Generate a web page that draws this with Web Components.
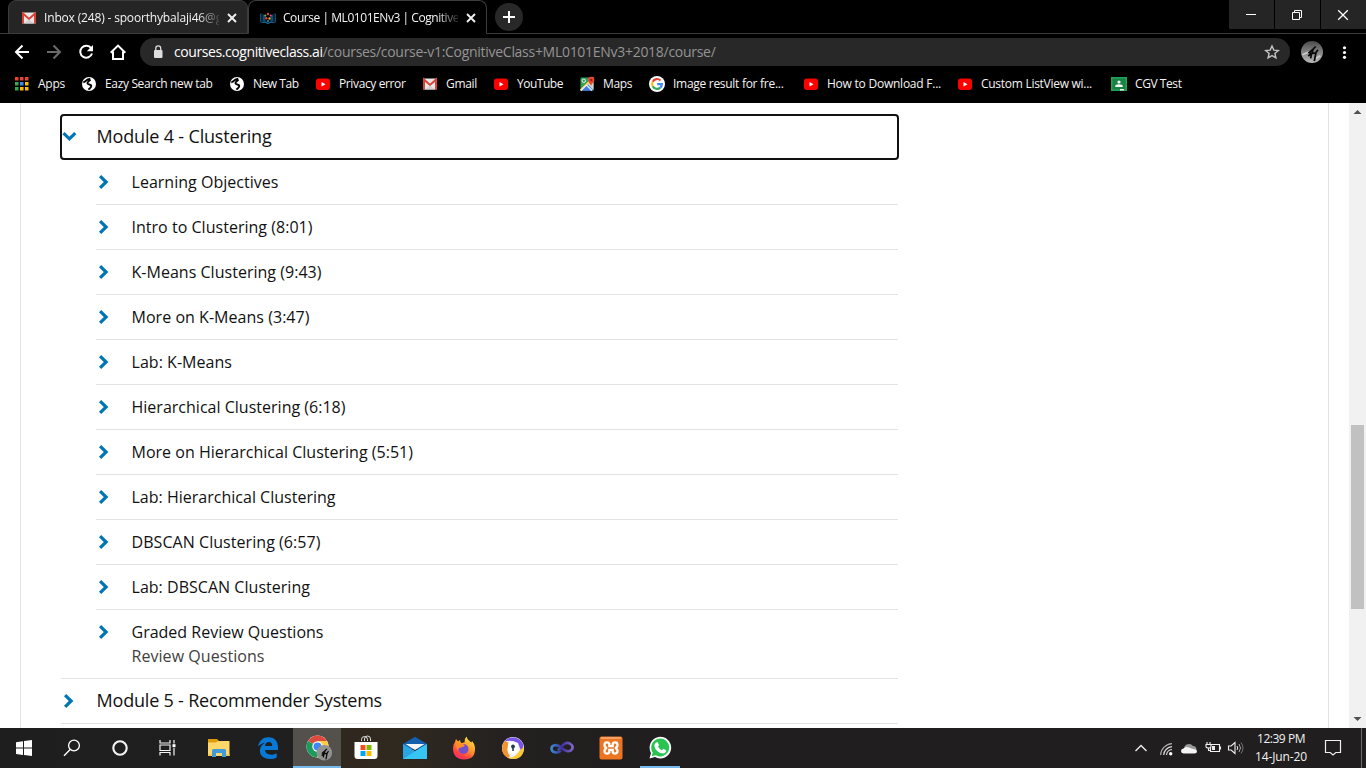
<!DOCTYPE html>
<html lang="en">
<head>
<meta charset="utf-8">
<title>Course | ML0101ENv3 | Cognitive Class</title>
<style>
html,body{margin:0;height:100%;overflow:hidden;background:#000}
</style>
</head>
<body>
<desktop-screen></desktop-screen>
<script>
const YT = '<rect x="1" y="2.5" width="14" height="11.5" rx="3" fill="#f00"/><path d="M6.5 6v4.6l4-2.3z" fill="#fff"/>';
const GLOBE = '<circle cx="8" cy="8" r="7" fill="#fff"/><path d="M2.300 6.300C4 6.200 4.500 5.500 5.500 4.300S8 3.300 9.300 2.600M9.500 3.700C7 5.500 6 6.500 6.600 7.600S10.500 8.300 10.300 10 8.600 12.400 7.400 13.600" fill="none" stroke="#000" stroke-width="1.900"/>';
const GMAIL = '<rect x="1" y="2.500" width="14" height="11" rx=".8" fill="#e8e8e8"/><path d="M2 13.500V3.500L8 9l6-5.500v10" fill="none" stroke="#dc4337" stroke-width="2"/><path d="M3 13.500L8 9.500l5 4z" fill="#d0d0d0"/>';
const FIGURE = '<path d="M8 16.500l3-3-2-1 4.500-4L16 6M13 9.500l-1 4 4-.5 2.500-3.500M16.500 12l-2 10M11.500 14l-1 5" fill="none" stroke="#080808" stroke-width="1.900"/>';
const ICONS = {
  gmail:[16,GMAIL], youtube:[16,YT], globe:[16,GLOBE],
  cc:[16,'<path d="M0 4l1.500-1V13L0 12zM16 4l-1.500-1V13l1.500-1zM2.500 4l3 2v6l-3-1zM13.500 4l-3 2v6l3-1z" fill="#0d4c72"/><path d="M1.500 12.500q3.500-1 6.500 1 3-2 6.500-1" stroke="#176799" fill="none" stroke-width="1.300"/><circle cx="8" cy="4" r="1.200" fill="#e6434b"/><circle cx="5.300" cy="5.500" r="1.100" fill="#7bb342"/><circle cx="10.700" cy="5.500" r="1.100" fill="#d94d8a"/><circle cx="6.300" cy="8.300" r="1.200" fill="#e04432"/><circle cx="9.500" cy="8.500" r="1.200" fill="#f0a030"/><circle cx="8" cy="11" r="1" fill="#26a4a4"/>'],
  close:[16,'<path d="M4 4l8 8M12 4l-8 8" stroke="#f1f1f1" stroke-width="1.900"/>'],
  plus:[28,'<circle cx="14" cy="14" r="14" fill="#282828"/><path d="M14 8v12M8 14h12" stroke="#fff" stroke-width="2"/>'],
  min:[16,'<path d="M3 7.500h10" stroke="#fff"/>'],
  restore:[16,'<path d="M3.500 5.500h7v7h-7zM5.500 5V3.500h7v7H11" stroke="#fff" fill="none"/>'],
  xwin:[16,'<path d="M3.200 3.200l9.600 9.600M12.800 3.200l-9.600 9.600" stroke="#fff" stroke-width="1.300"/>'],
  back:[20,'<path d="M17 10H4M10.500 3.500L4 10l6.500 6.500" stroke="#fff" stroke-width="2" fill="none"/>'],
  fwd:[20,'<path d="M3 10h13M9.500 3.500L16 10l-6.500 6.500" stroke="#6b6b6b" stroke-width="2" fill="none"/>'],
  reload:[20,'<path d="M15.200 6.200A6 6 0 1 0 16 11.500" stroke="#fff" stroke-width="2" fill="none"/><path d="M17 3v6.200h-6.200z" fill="#fff"/>'],
  home:[20,'<path d="M2.700 10.800L10 3.600l7.300 7.200M5 9.500V17h10V9.500" stroke="#fff" stroke-width="2" fill="none"/>'],
  lock:[16,'<rect x="4" y="6" width="8.500" height="8" rx="1" fill="#dedede"/><path d="M5.800 6.500V4.300a2.450 2.450 0 0 1 4.900 0v2.200" stroke="#dedede" stroke-width="1.300" fill="none"/>'],
  star:[16,'<path d="M8 2l1.800 4.100 4.500.4-3.400 3 1 4.400L8 11.600l-3.900 2.300 1-4.400-3.400-3 4.500-.4z" fill="none" stroke="#c4c4c4" stroke-width="1.400"/>'],
  avatar:[24,'<defs><linearGradient id="g" x2="0" y2="1"><stop stop-color="#4a4a4a"/><stop offset=".55" stop-color="#888"/><stop offset="1" stop-color="#bbb"/></linearGradient></defs><circle cx="12" cy="12" r="12" fill="url(#g)"/><path d="M1.500 15l7-3M16 19l5-3" stroke="#ccc" stroke-width="2"/>'+FIGURE],
  dots:[16,'<circle cx="8" cy="3.500" r="1.500" fill="#fff"/><circle cx="8" cy="8" r="1.500" fill="#fff"/><circle cx="8" cy="12.500" r="1.500" fill="#fff"/>'],
  apps:[16,'<path d="M2 1h3.500v3.500H2zM7 1h3.500v3.500H7zM12 1h3.500v3.500H12z" fill="#ea4335"/><path d="M2 6h3.500v3.500H2z" fill="#34a853"/><path d="M7 6h3.500v3.500H7z" fill="#4285f4"/><path d="M12 6h3.500v3.500H12zM7 11h3.500v3.500H7zM12 11h3.500v3.500H12z" fill="#fbbc05"/><path d="M2 11h3.500v3.500H2z" fill="#34a853"/>'],
  maps:[16,'<rect x="1.500" y="1.500" width="13" height="13" rx="1" fill="#34a15a"/><path d="M2 14.500L8.500 8l6 6.500z" fill="#4285f4"/><path d="M14.500 6v8L8.500 8l2-2z" fill="#d5d7da"/><path d="M1.500 14.500l13-13" stroke="#ffd04b" stroke-width="1.800"/><path d="M2 14.500l5.500-5.500 5.500 5.500" stroke="#eee" stroke-width="1.200" fill="#3f7de9"/><circle cx="4.800" cy="4.800" r="1.700" fill="none" stroke="#e4f2e8"/><path d="M12 10.500C11.700 7.500 9 6.500 9 4a3.200 3.200 0 0 1 6.400 0c0 2.500-3 3.500-3.400 6.500z" fill="#ea4335"/><circle cx="12.200" cy="4" r="1.200" fill="#922"/>'],
  google:[16,'<circle cx="8" cy="8" r="8" fill="#fff"/><g fill="none" stroke-width="2.100"><path d="M11.500 4.500A4.900 4.900 0 0 0 3.700 5.700" stroke="#ea4335"/><path d="M3.700 5.700a4.900 4.900 0 0 0 0 4.600" stroke="#fbbc05"/><path d="M3.700 10.300a4.900 4.900 0 0 0 7.600 1.300" stroke="#34a853"/><path d="M11.300 11.600A4.900 4.900 0 0 0 12.900 8.100H8.200" stroke="#4285f4"/></g>'],
  classroom:[16,'<rect y="1" width="16" height="14" fill="#20a257"/><rect x="1.500" y="2.500" width="13" height="11" fill="#188243"/><circle cx="8" cy="6" r="1.600" fill="#fff"/><path d="M4.300 11V10q0-1.700 3.700-1.700t3.700 1.700v1z" fill="#fff"/><path d="M9 13h4v1.500H9z" fill="#eee"/>'],
  right:[14,'<path d="M4.100 1.200L10.100 7 4.100 12.800" stroke="#0075b4" stroke-width="3.200" fill="none"/>'],
  down:[14,'<path d="M1.500 4.200L7.400 9.900l5.900-5.700" stroke="#0075b4" stroke-width="3.200" fill="none"/>'],
  win:[24,'<path d="M4 6.200l7-1v6.300H4zM12 5.100l8-1.100v7.500h-8zM4 12.500h7v6.400l-7-1zM12 12.500h8V20l-8-1.100z" fill="#fff"/>'],
  search:[24,'<circle cx="14" cy="9.500" r="5.400" fill="none" stroke="#fff" stroke-width="1.300"/><path d="M10.200 13.500L4 19.800" stroke="#fff" stroke-width="1.400"/>'],
  cortana:[24,'<circle cx="12" cy="12" r="6.700" fill="none" stroke="#f5f5f5" stroke-width="2.100"/>'],
  task:[24,'<path d="M4.500 4v3h10V4M4.500 19.500v-3h10v3M4.500 9h10v5.500h-10zM18.500 4v3.500M18.500 12v7.500" fill="none" stroke="#f3f3f3" stroke-width="1.200" transform="translate(-.5 0)"/><rect x="16.500" y="8.200" width="3" height="3" fill="#fff"/>'],
  folder:[24,'<path d="M1 3h9l2 2v4H1z" fill="#e09b08"/><path d="M1 6.500h8L11 5h11.500v15H1z" fill="#ffd869"/><path d="M5 21v-6.500q0-1.500 1.500-1.500h11q1.500 0 1.500 1.500V21h-4v-4H9v4z" fill="#409adb"/><path d="M1 20h4v-2H1zM19 20h3.500v-2H19z" fill="#f6c84c"/>'],
  edge:[24,'<path d="M2 10.700C3.200 4.500 7.200 1.200 12.500 1.200 19 1.200 22 6 22 11.500v2.600H9c.2 3.200 3 4.600 6.200 4.600 2.300 0 4-.6 5.500-1.500v4.300c-1.800 1-4 1.500-6.600 1.500-6.500 0-10.200-3.500-10.200-8.200 0-3.600 2-6.500 5.200-8C6 7.400 3.700 8.900 2 10.700zM9.100 10h7.100c0-2.500-1.100-4-3.400-4-2.100 0-3.500 1.500-3.700 4z" fill="#0878d7" fill-rule="evenodd"/>'],
  chrome:[28,'<circle cx="12.500" cy="12.500" r="11" fill="#fff"/><path d="M12.500 12.500L3 7A11 11 0 0 1 22 7z" fill="#dc4b3e"/><path d="M12.500 12.500L3 7a11 11 0 0 0 9 16.500l4-8z" fill="#189d5b"/><path d="M12.500 7H22a11 11 0 0 1-10 16.500z" fill="#ffce42"/><circle cx="12.500" cy="12.500" r="5.200" fill="#fff"/><circle cx="12.500" cy="12.500" r="4" fill="#4285f4"/><g transform="translate(11.500 11) scale(.65)"><circle cx="12" cy="12" r="12" fill="#929292"/>'+FIGURE+'</g>'],
  store:[24,'<path d="M8 6V4.500a3 3 0 0 1 6 0V6M11 6V4a3 3 0 0 1 6 0v2" stroke="#ddd" fill="none" transform="translate(-.5 -1)"/><path d="M.5 6h23v14q0 3-3 3h-17q-3 0-3-3z" fill="#fff"/><path d="M6.500 9h5v5h-5z" fill="#f25022"/><path d="M12.500 9h5v5h-5z" fill="#7fba00"/><path d="M6.500 15h5v5h-5z" fill="#00a4ef"/><path d="M12.500 15h5v5h-5z" fill="#ffb900"/>'],
  mail:[24,'<path d="M0 8L12 .8 24 8v5H0z" fill="#1260ad"/><path d="M0 8l12 7 12-7v15H0z" fill="#2aa5e4"/><path d="M0 23L24 8v15z" fill="#37c5f3"/><path d="M2.500 8h19L12 14z" fill="#f5f5f5"/>'],
  firefox:[24,'<defs><linearGradient id="f" x1=".8" y1="0" x2=".2" y2="1"><stop stop-color="#ffe842"/><stop offset=".45" stop-color="#ff9524"/><stop offset=".8" stop-color="#ff3b47"/><stop offset="1" stop-color="#e92d79"/></linearGradient></defs><path d="M3 6l1-3 2 2.500 2-1.500 1 3 3.500-.5Q12 3 14.500.500q.5 3 3.500 5l1.500 1 .5-1.500q3 3 3 8 0 10.500-11 10.500Q1 23 1 12.500q0-4 2-6.500z" fill="url(#f)"/><circle cx="11.500" cy="13" r="5" fill="#7650cb"/><path d="M4 8q4-2 9 1-1 2-4 2.500-3 0-3 3-2-2-2-6.500z" fill="#ff8b29"/>'],
  secure:[24,'<circle cx="12" cy="12" r="11" fill="#f1f1f4"/><path d="M3 6A11 11 0 0 1 22 8Q23 12 20 15L17 7Q9 3 3 6z" fill="#7a55e8"/><path d="M1 12Q1 8 4 5l4 2q-4 7 1 13l-2 2Q1 19 1 12z" fill="#f2932c"/><path d="M7 22q9-1 12-8l4-3q0 12-11 12-3 0-5-1z" fill="#fdc82e"/><path d="M7 7.500l5-2 5 2v5q0 4-5 6-5-2-5-6z" fill="#fff"/><circle cx="12" cy="10.500" r="1.900" fill="#263c4f"/><path d="M11.200 11h1.600v4h-1.600z" fill="#263c4f"/>'],
  infinity:[24,'<defs><linearGradient id="i"><stop stop-color="#3a88d2"/><stop offset=".5" stop-color="#3e2f9b"/><stop offset="1" stop-color="#8165c4"/></linearGradient></defs><path d="M11 14.500C7.500 18 1.500 16.500 1.500 12.500S7.500 8 11 11.500s8.500 5.500 11.200 1.500C24 9 18 4.500 13.500 8.500L8 14.500" fill="none" stroke="url(#i)" stroke-width="2.600"/>'],
  xampp:[24,'<rect x=".5" y=".5" width="23" height="23" rx="2" fill="#ed7421"/><path d="M2 2h20" stroke="#f7b17f" stroke-width="1.500"/><path d="M10.300 8.300C10 5.600 5.500 5.700 5.500 8.900c0 1.900 1.200 2.800 2.500 3.100-1.300.3-2.500 1.200-2.500 3.100 0 3.200 4.500 3.300 4.800.6M13.700 8.300c.3-2.700 4.800-2.600 4.800.6 0 1.900-1.200 2.800-2.500 3.100 1.300.3 2.500 1.200 2.500 3.100 0 3.200-4.500 3.300-4.800.6M10.300 7.500v2.700h3.400V7.500M10.300 16.500v-2.700h3.400v2.700" fill="none" stroke="#fff" stroke-width="2.300"/>'],
  whatsapp:[24,'<path d="M1.500 22.500L3 17A10.800 10.800 0 1 1 7 21z" fill="#fff"/><path d="M3.700 20.200l1-3.700a9 9 0 1 1 3 2.800z" fill="#29c451"/><path d="M8 6.500l1.800-.2 1.200 3-1 1.500q1.500 2.500 4 3.500l1.300-1.600 2.900 1.500q0 3-3.200 3.200-7.200-1-8.700-7.500Q6.500 8 8 6.500z" fill="#fff"/>'],
  up:[16,'<path d="M2.500 11L8 5.500l5.500 5.500" stroke="#eee" stroke-width="1.400" fill="none"/>'],
  wifi:[16,'<g fill="none" stroke-width="1.200"><path d="M2.600 15A12 12 0 0 1 14 3.600" stroke="#aaa"/><path d="M5.700 15A8.800 8.800 0 0 1 14 6.700M8.500 15A5.900 5.900 0 0 1 14 9.500" stroke="#ddd"/></g><circle cx="12.700" cy="13.800" r="1.700" fill="#fff"/>'],
  cloud:[16,'<path d="M3 8.500A5 5 0 0 1 12 6q3.500.2 3.500 4H2z" fill="#999"/><path d="M2.500 13.500q-2.500-.3-2.500-2.500t2.500-2.500Q4 6.500 6.500 7L12 9q4 0 4 2.500 0 2-2.500 2z" fill="#f4f4f4"/>'],
  battery:[16,'<path d="M6.500 4.500h8v7h-9V8M15.500 6.500v3M2 2v2M5 2v2M1 4.500h5v2q0 1.500-2.500 1.500T1 6.500zM3.500 8v2.500h2" fill="none" stroke="#f2f2f2" stroke-width="1.100"/><path d="M7 6h3v4H7z" fill="#eee"/>'],
  sound:[18,'<path d="M1.500 7h2.600L8 3.500v11L4.100 11H1.500z" fill="none" stroke="#eee" stroke-width="1.100"/><path d="M10 7q1.500 2 0 4" stroke="#eee" fill="none"/><path d="M12 5q3 4 0 8" stroke="#aaa" fill="none"/><path d="M14 3.500q4 5.500 0 11" stroke="#777" fill="none"/>'],
  note:[18,'<path d="M1.500 1.500h15v12h-4.700L9 16l-2.800-2.500H1.500z" fill="none" stroke="#f0f0f0" stroke-width="1.200"/>']
};
function define(name, css, html, after){
  const t = document.createElement('template');
  t.innerHTML = '<style>' + css + '</style>' + html;
  customElements.define(name, class extends HTMLElement{
    connectedCallback(){
      if(this.shadowRoot) return;
      const root = this.attachShadow({mode:'open'});
      root.append(t.content.cloneNode(true));
      if(after) after.call(this, root);
    }
  });
}

/* Vector icon: name picks the artwork, size sets the box. */
define('ui-icon', ':host{display:block;flex:none;line-height:0}svg{display:block;overflow:visible}', '<span></span>', function(root){
  const [box, art] = ICONS[this.getAttribute('name')];
  const s = this.getAttribute('size') || box;
  this.style.width = this.style.height = s + 'px';
  root.querySelector('span').innerHTML = `<svg width="${s}" height="${s}" viewBox="0 0 ${box} ${box}">${art}</svg>`;
});

/* One line of text tracked to a given width. */
define('ui-label', ':host{display:block;white-space:nowrap;flex:none}span{display:inline-block}', '<span></span>', function(root){
  const s = root.querySelector('span');
  s.textContent = this.getAttribute('text');
  const w = +this.getAttribute('w');
  if(w) s.style.letterSpacing = (w - s.getBoundingClientRect().width) / s.textContent.length + 'px';
});

define('browser-tab', `
:host{display:flex;box-sizing:border-box;width:240px;height:34px;padding:1px 7px 0 12px;align-items:center;border:1px solid #3c3c3c;border-radius:8px 8px 0 0;background:#252525;color:#f4f4f4;font-size:12px}
:host([active]){width:239px;background:#000;border-bottom-color:#000;padding-left:11px}
.t{width:176px;margin-left:7px;overflow:hidden;-webkit-mask:linear-gradient(90deg,#000 88%,transparent 102%);mask:linear-gradient(90deg,#000 88%,transparent 102%)}
ui-icon:last-child{margin-left:5px}`,
'<ui-icon class="i" name="close"></ui-icon><div class="t"><slot></slot></div><ui-icon name="close"></ui-icon>',
function(root){
  const n = document.createElement('ui-icon');
  n.setAttribute('name', this.getAttribute('icon'));
  root.querySelector('.i').replaceWith(n);
});

define('tab-strip', `
:host{display:flex;height:34px;box-sizing:border-box;background:linear-gradient(#3c3c3c,#3c3c3c) 0 33px/100% 1px no-repeat #000}
.lead{width:8px}.new{margin:3px 0 0 8px}.sp{flex:1}
.wc{display:flex;gap:1px}.wc div{width:45px;height:29px;background:#252525;display:grid;place-items:center;box-sizing:border-box;padding-right:2px}`,
`<div class="lead"></div>
<browser-tab icon="gmail"><ui-label text="Inbox (248) - spoorthybalaji46@g" w="178"></ui-label></browser-tab>
<browser-tab icon="cc" active><ui-label text="Course | ML0101ENv3 | Cognitive" w="176"></ui-label></browser-tab>
<ui-icon class="new" name="plus"></ui-icon><div class="sp"></div>
<div class="wc"><div><ui-icon name="min"></ui-icon></div><div><ui-icon name="restore"></ui-icon></div><div><ui-icon name="xwin"></ui-icon></div></div>`);

define('tool-bar', `
:host{display:flex;height:36px;align-items:center;background:#000;padding-left:12px;box-sizing:border-box}
.nav{display:flex;gap:12px;width:128px}
.box{display:flex;align-items:center;box-sizing:border-box;width:1150px;height:28px;border-radius:14px;background:#282828;padding:0 10px;font-size:14px;color:#fff}
.lab{display:flex;margin:-1px 0 0 8px}.path{color:#949494}.star{margin-left:auto}
.av{margin:0 13px 0 11px}`,
`<div class="nav"><ui-icon name="back"></ui-icon><ui-icon name="fwd"></ui-icon><ui-icon name="reload"></ui-icon><ui-icon name="home"></ui-icon></div>
<div class="box"><ui-icon name="lock"></ui-icon><div class="lab"><ui-label text="courses.cognitiveclass.ai" w="148.500"></ui-label><ui-label class="path" text="/courses/course-v1:CognitiveClass+ML0101ENv3+2018/course/" w="393"></ui-label></div><ui-icon class="star" name="star"></ui-icon></div>
<ui-icon class="av" name="avatar" size="22"></ui-icon><ui-icon name="dots" size="17"></ui-icon>`);

define('book-mark', ':host{display:flex;flex:none;align-items:center;gap:8px;font-size:12px;color:#f4f4f4}:host([icon=apps]){gap:9px}::slotted(ui-label){margin-top:-2px}', '<slot></slot>', function(){
  this.style.width = this.getAttribute('span') + 'px';
  this.innerHTML = `<ui-icon name="${this.getAttribute('icon')}"></ui-icon><ui-label text="${this.getAttribute('text')}" w="${this.getAttribute('w')}"></ui-label>`;
});
const MARKS = [['apps','Apps',27,68],['globe','Eazy Search new tab',107.5,148],['globe','New Tab',45.5,86],['youtube','Privacy error',66.500,107],['gmail','Gmail',31,71],['youtube','YouTube',46,86],['maps','Maps',29,70],['google','Image result for fre...',110.500,154],['youtube','How to Download F...',114,154],['youtube','Custom ListView wi...',111,154],['classroom','CGV Test',46.500,87]];
define('bookmark-bar', ':host{display:flex;box-sizing:border-box;height:33px;padding:0 0 5px 13px;background:#000}',
  MARKS.map(m=>`<book-mark icon="${m[0]}" text="${m[1]}" w="${m[2]}" span="${m[3]}"></book-mark>`).join(''));

define('outline-item', `
:host{display:grid;box-sizing:border-box;grid-template-columns:35.500px 1fr;height:45px;border-bottom:1px solid #e3e3e3;font-size:16px;line-height:24px;color:#111;padding-top:10px;align-content:start}
:host([last]){height:68px;border:0}
ui-icon{margin-top:5px}.sub{grid-column:2;color:#414141}`,
'<ui-icon name="right"></ui-icon><slot></slot><div class="sub"><slot name="sub"></slot></div>');

define('outline-module', `
:host{display:block;color:#111;font-size:18px}
.h{display:flex;box-sizing:border-box;height:44px;align-items:center;padding-bottom:1px;gap:21.500px}
.h ::slotted(ui-label),slot[name=title]::slotted(ui-label){margin-top:-1px}
:host([open]) .h{height:46px;width:839px;margin-left:-1px;border:2px solid #111;border-radius:4px;padding:0 0 2px;gap:20.500px}
:host([open]) slot[name=title]::slotted(ui-label){margin-top:0}
.list{margin-left:35px}
:host([open]){border-bottom:1px solid #e3e3e3}`,
'<div class="h"><span class="ic"></span><slot name="title"></slot></div><div class="list"><slot></slot></div>',
function(root){
  root.querySelector('.ic').innerHTML = `<ui-icon name="${this.hasAttribute('open')?'down':'right'}"></ui-icon>`;
});

const ITEMS = [['Learning Objectives',147],['Intro to Clustering (8:01)',181],['K-Means Clustering (9:43)',190],['More on K-Means (3:47)',178],['Lab: K-Means',100.500],['Hierarchical Clustering (6:18)',214],['More on Hierarchical Clustering (5:51)',281.500],['Lab: Hierarchical Clustering',204],['DBSCAN Clustering (6:57)',189],['Lab: DBSCAN Clustering',178.500]];
define('course-page', `
:host{display:flex;height:625px;background:#fff;overflow:hidden;font-family:"Open Sans",sans-serif;font-weight:400}
.card{box-sizing:border-box;width:1309px;margin-left:20px;border:solid #e3e3e3;border-width:0 1px;padding:11px 0 0 40px}
.tree{width:837px}.end{border-top:1px solid #e3e3e3}`,
`<div class="card"><div class="tree">
<outline-module open><ui-label slot="title" text="Module 4 - Clustering" w="175"></ui-label>
${ITEMS.map(i=>`<outline-item><ui-label text="${i[0]}" w="${i[1]}"></ui-label></outline-item>`).join('')}
<outline-item last><ui-label text="Graded Review Questions" w="192"></ui-label><ui-label slot="sub" text="Review Questions" w="133"></ui-label></outline-item>
</outline-module>
<outline-module><ui-label slot="title" text="Module 5 - Recommender Systems" w="285.500"></ui-label></outline-module>
<div class="end"></div></div></div>
<scroll-bar></scroll-bar>`);

define('scroll-bar', `
:host{display:flex;flex-direction:column;align-items:center;width:17px;margin-left:auto;background:#f1f1f1}
.thumb{width:13px;height:184px;background:#c1c1c1;margin-top:305px}
svg{display:block}.dn{margin-top:auto}`,
`<svg width="17" height="17"><path d="M4.500 11h8L8.500 7z" fill="#505050"/></svg><div class="thumb"></div><svg class="dn" width="17" height="17"><path d="M4.500 6h8l-4 4z" fill="#505050"/></svg>`);

const APPS = ['win','search','cortana','task','folder','edge','chrome','store','mail','firefox','secure','infinity','xampp','whatsapp'];
define('task-bar', `
:host{display:flex;height:40px;background:linear-gradient(90deg,#1f1e1e 0,#201f1f 290px,#30281e 345px,#30291f 400px,#242120 500px,#201e1e 620px,#201e1e);color:#f2f2f2;font-size:12px}
.a{box-sizing:border-box;width:49px;height:40px;display:grid;place-items:center}
.a:nth-of-type(-n+4){width:48px}
.a.folder{margin-left:2px}
.a.chrome{width:48px;margin-left:1px;background:#54504c;border-bottom:2px solid #76b9ed;padding:2px 0 0 3px}
.a.whatsapp{width:40px;margin-left:5px;border-bottom:2px solid #76b9ed;padding-top:2px}
.tray{display:flex;align-items:center;margin-left:auto;gap:8px}
.clock{width:58px;display:grid;justify-items:center;line-height:18px;margin:0 1px 0 -1px}
.up{margin-right:1px}.wifi{margin-right:-1px}.bat{margin-right:-2px}
.note{margin:0 11px 0 5px}.edge-line{width:1px;height:40px;background:#6d6b6a;margin-right:4px}`,
APPS.map(a=>`<div class="a ${a}"><ui-icon name="${a}"></ui-icon></div>`).join('') +
`<div class="tray"><ui-icon class="up" name="up"></ui-icon><ui-icon class="wifi" name="wifi"></ui-icon><ui-icon name="cloud"></ui-icon><ui-icon class="bat" name="battery"></ui-icon><ui-icon name="sound"></ui-icon>
<div class="clock"><ui-label text="12:39 PM" w="48"></ui-label><ui-label text="14-Jun-20" w="52"></ui-label></div>
<ui-icon class="note" name="note"></ui-icon><div class="edge-line"></div></div>`);

define('desktop-screen', ':host{display:flex;flex-direction:column;width:1366px;height:768px;overflow:hidden;font-family:"Open Sans","Noto Sans",sans-serif;background:#000}',
'<tab-strip></tab-strip><tool-bar></tool-bar><bookmark-bar></bookmark-bar><course-page></course-page><task-bar></task-bar>');
</script>
</body>
</html>
